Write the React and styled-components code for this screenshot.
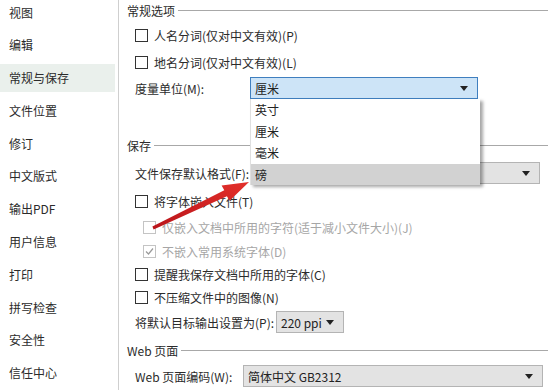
import React from 'react';
import styled, { createGlobalStyle } from 'styled-components';

const GlobalStyle = createGlobalStyle`
  html, body {
    margin: 0;
    padding: 0;
    background: #fff;
  }
  body {
    font-family: "Noto Sans CJK SC", "Noto Sans", sans-serif;
    font-size: 12px;
    color: #2b2b2b;
  }
`;

const Page = styled.div`
  position: relative;
  width: 548px;
  height: 390px;
  overflow: hidden;
  display: flex;
  flex-direction: row;
  background: #fff;
`;

const Sidebar = styled.div`
  width: 118px;
  flex-shrink: 0;
  border-right: 1px solid #cfcfcf;
  display: flex;
  flex-direction: column;
  gap: 4.8px;
  margin-top: -2px;
`;

const NavItem = styled.div`
  width: 115px;
  height: 28px;
  flex-shrink: 0;
  display: flex;
  align-items: center;
  padding-left: 9px;
  box-sizing: border-box;
  font-size: 12px;
  color: #2b2b2b;
  background: ${(p) => (p.$active ? '#eaf0ec' : 'transparent')};
`;

const Content = styled.div`
  flex: 1;
  padding-left: 8px;
  display: flex;
  flex-direction: column;
`;

const Header = styled.div`
  height: 20px;
  margin-top: ${(p) => p.$mt ?? 0}px;
  display: flex;
  align-items: center;
  &::after {
    content: '';
    flex: 1;
    margin-left: 3px;
    border-top: 1px solid #a8a8a8;
  }
`;

const Row = styled.div`
  height: ${(p) => p.$h ?? 24}px;
  margin-top: ${(p) => p.$mt ?? 0}px;
  padding-left: ${(p) => p.$indent ?? 8}px;
  display: flex;
  align-items: center;
  gap: ${(p) => p.$gap ?? 6}px;
  color: ${(p) => (p.$disabled ? '#a6a6a6' : '#2b2b2b')};
  white-space: nowrap;
`;

const Box = styled.span`
  width: 11px;
  height: 11px;
  border: 1px solid ${(p) => (p.$disabled ? '#c4c4c4' : '#333')};
  background: #fff;
  flex-shrink: 0;
  display: flex;
  align-items: center;
  justify-content: center;
`;

const Label = styled.span`
  width: ${(p) => (p.$w ? `${p.$w}px` : 'auto')};
  flex-shrink: 0;
`;

const SelectWrap = styled.div`
  position: relative;
`;

const Select = styled.div`
  width: ${(p) => p.$w}px;
  height: 22px;
  box-sizing: border-box;
  border: 1px solid ${(p) => (p.$focus ? '#3f7fbf' : '#b4b4b4')};
  background: ${(p) => (p.$focus ? '#cde4f7' : '#e3e3e3')};
  display: flex;
  align-items: center;
  padding: 0 9px 0 4px;
  color: #222;
  &::after {
    content: '';
    margin-left: auto;
    border-left: 4px solid transparent;
    border-right: 4px solid transparent;
    border-top: 5px solid #222;
  }
`;

const Dropdown = styled.div`
  position: absolute;
  left: 0;
  top: 22px;
  width: 229px;
  background: #fff;
  border-left: 1px solid #e0e0e0;
  box-shadow: 3px 2px 3px rgba(0, 0, 0, 0.35);
  z-index: 5;
`;

const Option = styled.div`
  height: 21.5px;
  display: flex;
  align-items: center;
  padding-left: 4px;
  background: ${(p) => (p.$hover ? '#d2d2d2' : '#fff')};
  color: #222;
`;

const ArrowLayer = styled.svg`
  position: absolute;
  left: 0;
  top: 0;
  pointer-events: none;
  z-index: 10;
`;

const navItems = ['视图', '编辑', '常规与保存', '文件位置', '修订', '中文版式', '输出PDF', '用户信息', '打印', '拼写检查', '安全性', '信任中心'];

function Check({ checked, disabled }) {
  return (
    <Box $disabled={disabled}>
      {checked && (
        <svg width="9" height="9" viewBox="0 0 9 9">
          <path d="M1 4.5 L3.5 7 L8 1.5" fill="none" stroke="#9a9a9a" strokeWidth="1.2" />
        </svg>
      )}
    </Box>
  );
}

export default function App() {
  return (
    <>
      <GlobalStyle />
      <Page>
        <Sidebar>
          {navItems.map((n) => (
            <NavItem key={n} $active={n === '常规与保存'}>{n}</NavItem>
          ))}
        </Sidebar>
        <Content>
          <Header>常规选项</Header>
          <Row $h={26} $mt={2}><Check />人名分词(仅对中文有效)(P)</Row>
          <Row $h={26} $mt={1}><Check />地名分词(仅对中文有效)(L)</Row>
          <Row $h={24} $mt={1} $gap={0}>
            <Label $w={115}>度量单位(M):</Label>
            <SelectWrap>
              <Select $w={228} $focus>厘米</Select>
              <Dropdown>
                <Option>英寸</Option>
                <Option>厘米</Option>
                <Option>毫米</Option>
                <Option $hover>磅</Option>
              </Dropdown>
            </SelectWrap>
          </Row>

          <Header $mt={35}>保存</Header>
          <Row $h={24} $mt={6} $gap={0}>
            <Label $w={115}>文件保存默认格式(F):</Label>
            <Select $w={290}>磅</Select>
          </Row>
          <Row $h={26} $mt={3}><Check />将字体嵌入文件(T)</Row>
          <Row $h={26} $indent={16} $disabled><Check disabled />仅嵌入文档中所用的字符(适于减小文件大小)(J)</Row>
          <Row $h={22} $indent={16} $disabled><Check checked disabled />不嵌入常用系统字体(D)</Row>
          <Row $h={24}><Check />提醒我保存文档中所用的字体(C)</Row>
          <Row $h={24} $mt={-1}><Check />不压缩文件中的图像(N)</Row>
          <Row $h={24} $mt={1} $gap={0}>
            <Label $w={141}>将默认目标输出设置为(P):</Label>
            <Select $w={68}>220 ppi</Select>
          </Row>

          <Header $mt={6}>Web 页面</Header>
          <Row $h={24} $mt={4} $gap={0}>
            <Label $w={108}>Web 页面编码(W):</Label>
            <Select $w={300}>简体中文 GB2312</Select>
          </Row>
        </Content>

        <ArrowLayer width="548" height="390" viewBox="0 0 548 390">
          <defs>
            <linearGradient id="redArrow" x1="0" y1="1" x2="1" y2="0">
              <stop offset="0" stopColor="#b9141a" />
              <stop offset="1" stopColor="#e3302b" />
            </linearGradient>
          </defs>
          <polygon
            points="152.4,226.6 224.3,190.2 221.6,185.4 249,182 229.6,200.8 226.9,196.2 153.6,229.6"
            fill="url(#redArrow)"
          />
        </ArrowLayer>
      </Page>
    </>
  );
}
